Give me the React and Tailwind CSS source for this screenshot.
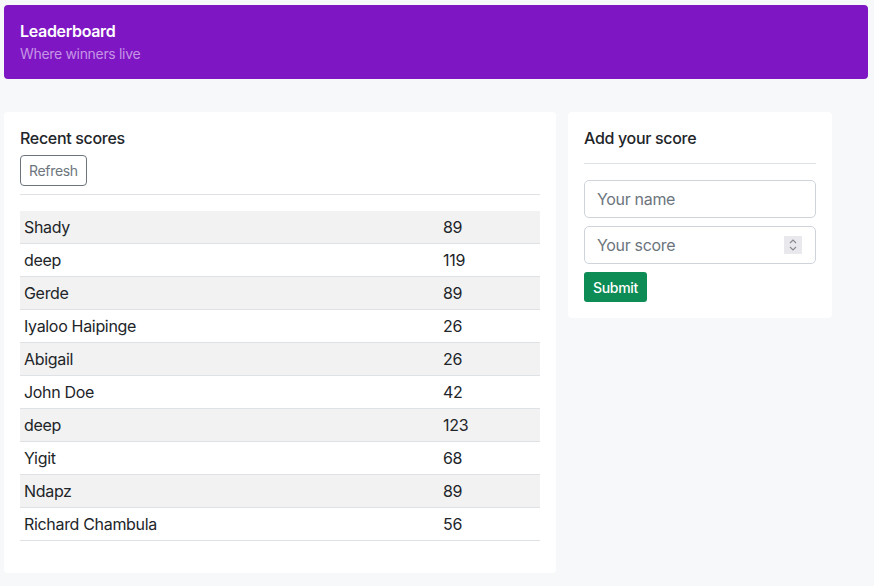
import React from 'react';

const scores = [
    { name: 'Shady', score: 89 },
    { name: 'deep', score: 119 },
    { name: 'Gerde', score: 89 },
    { name: 'Iyaloo Haipinge', score: 26 },
    { name: 'Abigail', score: 26 },
    { name: 'John Doe', score: 42 },
    { name: 'deep', score: 123 },
    { name: 'Yigit', score: 68 },
    { name: 'Ndapz', score: 89 },
    { name: 'Richard Chambula', score: 56 },
];

export default function App() {
    return (
        <div className="min-h-screen bg-[#f7f8fa] pt-[5px] pl-[4px] pr-[6px] tracking-[-0.02em] text-[#212529]" style={{ fontFamily: 'Inter, "Liberation Sans", sans-serif' }}>
            <header className="h-[74px] rounded-[4px] bg-[#7e16c3] px-4 pt-[14px]">
                <h1 className="text-[16px] font-semibold leading-[24px] text-white">Leaderboard</h1>
                <p className="mt-[1px] text-[14px] leading-[20px] text-[#c594e6]">Where winners live</p>
            </header>

            <div className="mt-[33px] flex items-start gap-[12px]">
                <section className="w-[552px] rounded-[4px] bg-white px-4 pt-[16px] pb-[32px]">
                    <h2 className="text-[16px] font-medium leading-[20px]">Recent scores</h2>
                    <button className="mt-[7px] h-[31px] rounded-[4px] border border-[#6c757d] px-[8px] text-[14px] text-[#6c757d]">
                        Refresh
                    </button>
                    <hr className="mt-[8px] mb-[16px] border-t border-[#dee2e6]" />
                    <div className="flex flex-col">
                        {scores.map((row, i) => (
                            <div
                                key={i}
                                className={`grid h-[33px] grid-cols-[419px_1fr] items-center border-b border-[#dee2e6] px-1 text-[16px] ${i % 2 === 0 ? 'bg-[#f2f2f2]' : 'bg-white'}`}
                            >
                                <span>{row.name}</span>
                                <span>{row.score}</span>
                            </div>
                        ))}
                    </div>
                </section>

                <section className="w-[264px] rounded-[4px] bg-white p-4">
                    <h2 className="text-[16px] font-medium leading-[20px]">Add your score</h2>
                    <hr className="mt-[15px] mb-[16px] border-t border-[#dee2e6]" />
                    <input
                        className="block h-[38px] w-full rounded-[5px] border border-[#ced4da] px-3 text-[16px] outline-none placeholder:text-[#6c757d]"
                        placeholder="Your name"
                    />
                    <div className="mt-[8px] flex h-[38px] w-full items-center rounded-[5px] border border-[#ced4da] pl-3 pr-[13px]">
                        <input
                            className="min-w-0 flex-1 text-[16px] outline-none placeholder:text-[#6c757d]"
                            placeholder="Your score"
                        />
                        <span className="flex h-[18px] w-[18px] items-center justify-center bg-[#e9e9ed]">
                            <svg width="10" height="14" viewBox="0 0 10 14" fill="none" stroke="#8a8a93" strokeWidth="1.2">
                                <path d="M2 5 L5 2 L8 5" />
                                <path d="M2 9 L5 12 L8 9" />
                            </svg>
                        </span>
                    </div>
                    <button className="mt-[8px] h-[30px] rounded-[3px] bg-[#0d8c55] px-[9px] text-[14px] font-medium text-white">
                        Submit
                    </button>
                </section>
            </div>
        </div>
    );
}
